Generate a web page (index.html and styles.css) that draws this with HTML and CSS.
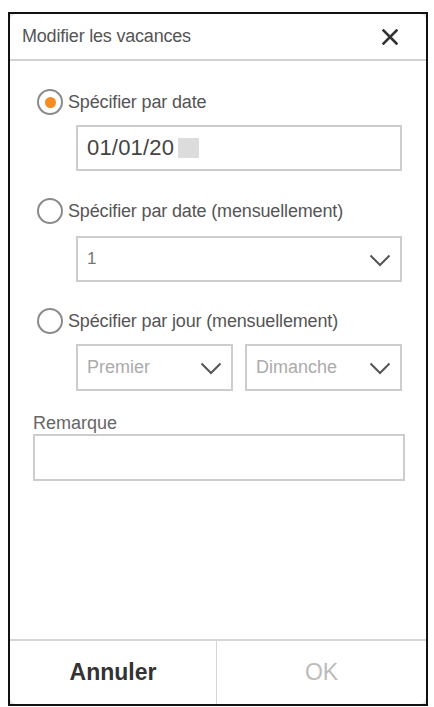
FILE: index.html
```html
<!DOCTYPE html>
<html lang="fr">
<head>
<meta charset="utf-8">
<title>Modifier les vacances</title>
<link rel="stylesheet" href="styles.css">
</head>
<body>
<div class="frame">
  <div class="dialog">
    <div class="header">
      <span class="title">Modifier les vacances</span>
      <svg class="close" width="16" height="16" viewBox="0 0 16 16"><path d="M1.5 1.5 L14.5 14.5 M14.5 1.5 L1.5 14.5" stroke="#333" stroke-width="2.6" stroke-linecap="square"/></svg>
    </div>
    <div class="content">
      <div class="radio-row r1">
        <span class="radio checked"><span class="dot"></span></span>
        <span class="label">Spécifier par date</span>
      </div>
      <div class="field date-field">
        <span class="date-value">01/01/20</span><span class="blur"></span>
      </div>
      <div class="radio-row r2">
        <span class="radio"></span>
        <span class="label">Spécifier par date (mensuellement)</span>
      </div>
      <div class="field select-field s1">
        <span class="select-value">1</span>
        <svg class="chev" width="22" height="13" viewBox="0 0 22 13"><path d="M1.5 1.5 L11 11 L20.5 1.5" fill="none" stroke="#555" stroke-width="2"/></svg>
      </div>
      <div class="radio-row r3">
        <span class="radio"></span>
        <span class="label">Spécifier par jour (mensuellement)</span>
      </div>
      <div class="pair">
        <div class="field select-field half">
          <span class="select-value muted">Premier</span>
          <svg class="chev" width="22" height="13" viewBox="0 0 22 13"><path d="M1.5 1.5 L11 11 L20.5 1.5" fill="none" stroke="#555" stroke-width="2"/></svg>
        </div>
        <div class="field select-field half">
          <span class="select-value muted">Dimanche</span>
          <svg class="chev" width="22" height="13" viewBox="0 0 22 13"><path d="M1.5 1.5 L11 11 L20.5 1.5" fill="none" stroke="#555" stroke-width="2"/></svg>
        </div>
      </div>
      <div class="remark-label">Remarque</div>
      <div class="field remark-field"></div>
    </div>
    <div class="footer">
      <div class="btn cancel">Annuler</div>
      <div class="btn ok">OK</div>
    </div>
  </div>
</div>
</body>
</html>
```
FILE: styles.css
```css
html, body {
  margin: 0;
  padding: 0;
  background: #fff;
}
body {
  font-family: "Liberation Sans", Arial, sans-serif;
}
.frame {
  margin: 12px 0 0 8px;
  width: 416px;
  height: 690px;
  border: 2px solid #111;
  background: #e4e4e4;
}
.dialog {
  height: 100%;
  background: #fff;
  border-radius: 6px;
  display: flex;
  flex-direction: column;
}
.header {
  height: 45px;
  border-bottom: 2px solid #d2d2d2;
  display: flex;
  align-items: center;
  justify-content: space-between;
  padding: 0 28px 0 12px;
}
.title {
  font-size: 18px;
  color: #555;
  letter-spacing: -0.2px;
}
.close {
  display: block;
}
.content {
  flex: 1;
  display: flex;
  flex-direction: column;
  padding: 0 24px 0 0;
}
.radio-row {
  display: flex;
  align-items: center;
  height: 26px;
  padding-left: 27px;
  gap: 5px;
}
.r1 { margin-top: 28px; }
.r2 { margin-top: 27px; }
.r3 { margin-top: 26px; }
.radio {
  width: 22px;
  height: 22px;
  border: 2px solid #8a8a8a;
  border-radius: 50%;
  display: flex;
  align-items: center;
  justify-content: center;
  flex: none;
}
.dot {
  width: 11px;
  height: 11px;
  border-radius: 50%;
  background: #f68b1f;
}
.label {
  font-size: 18px;
  color: #555;
  letter-spacing: -0.15px;
}
.field {
  box-sizing: border-box;
  border: 2px solid #cdcdcd;
  background: #fff;
  display: flex;
  align-items: center;
}
.date-field {
  margin: 10px 0 0 66px;
  height: 46px;
  padding-left: 9px;
}
.date-value {
  font-size: 22px;
  color: #444;
  letter-spacing: 0.2px;
}
.blur {
  width: 21px;
  height: 20px;
  background: #dcdcdc;
  margin-left: 4px;
  filter: blur(0.6px);
}
.select-field {
  height: 46px;
  padding: 0 9px 0 9px;
  justify-content: space-between;
}
.s1 {
  margin: 12px 0 0 66px;
}
.select-value {
  font-size: 17px;
  color: #777;
}
.select-value.muted {
  color: #ababab;
  font-size: 18px;
}
.chev {
  display: block;
  margin-top: 2px;
}
.pair {
  margin: 10px 0 0 66px;
  display: flex;
  gap: 12px;
}
.half {
  flex: 1;
  height: 47px;
}
.remark-label {
  margin: 22px 0 0 23px;
  font-size: 18px;
  line-height: 20px;
  color: #666;
}
.remark-field {
  margin: 1px -3px 0 23px;
  height: 47px;
}
.footer {
  height: 63px;
  border-top: 2px solid #d6d6d6;
  display: flex;
}
.btn {
  flex: 1;
  display: flex;
  align-items: center;
  justify-content: center;
  font-size: 23px;
}
.cancel {
  flex: 0 0 206px;
  border-right: 1px solid #d6d6d6;
  font-weight: bold;
  color: #333;
}
.ok {
  color: #bcbcbc;
}
```
